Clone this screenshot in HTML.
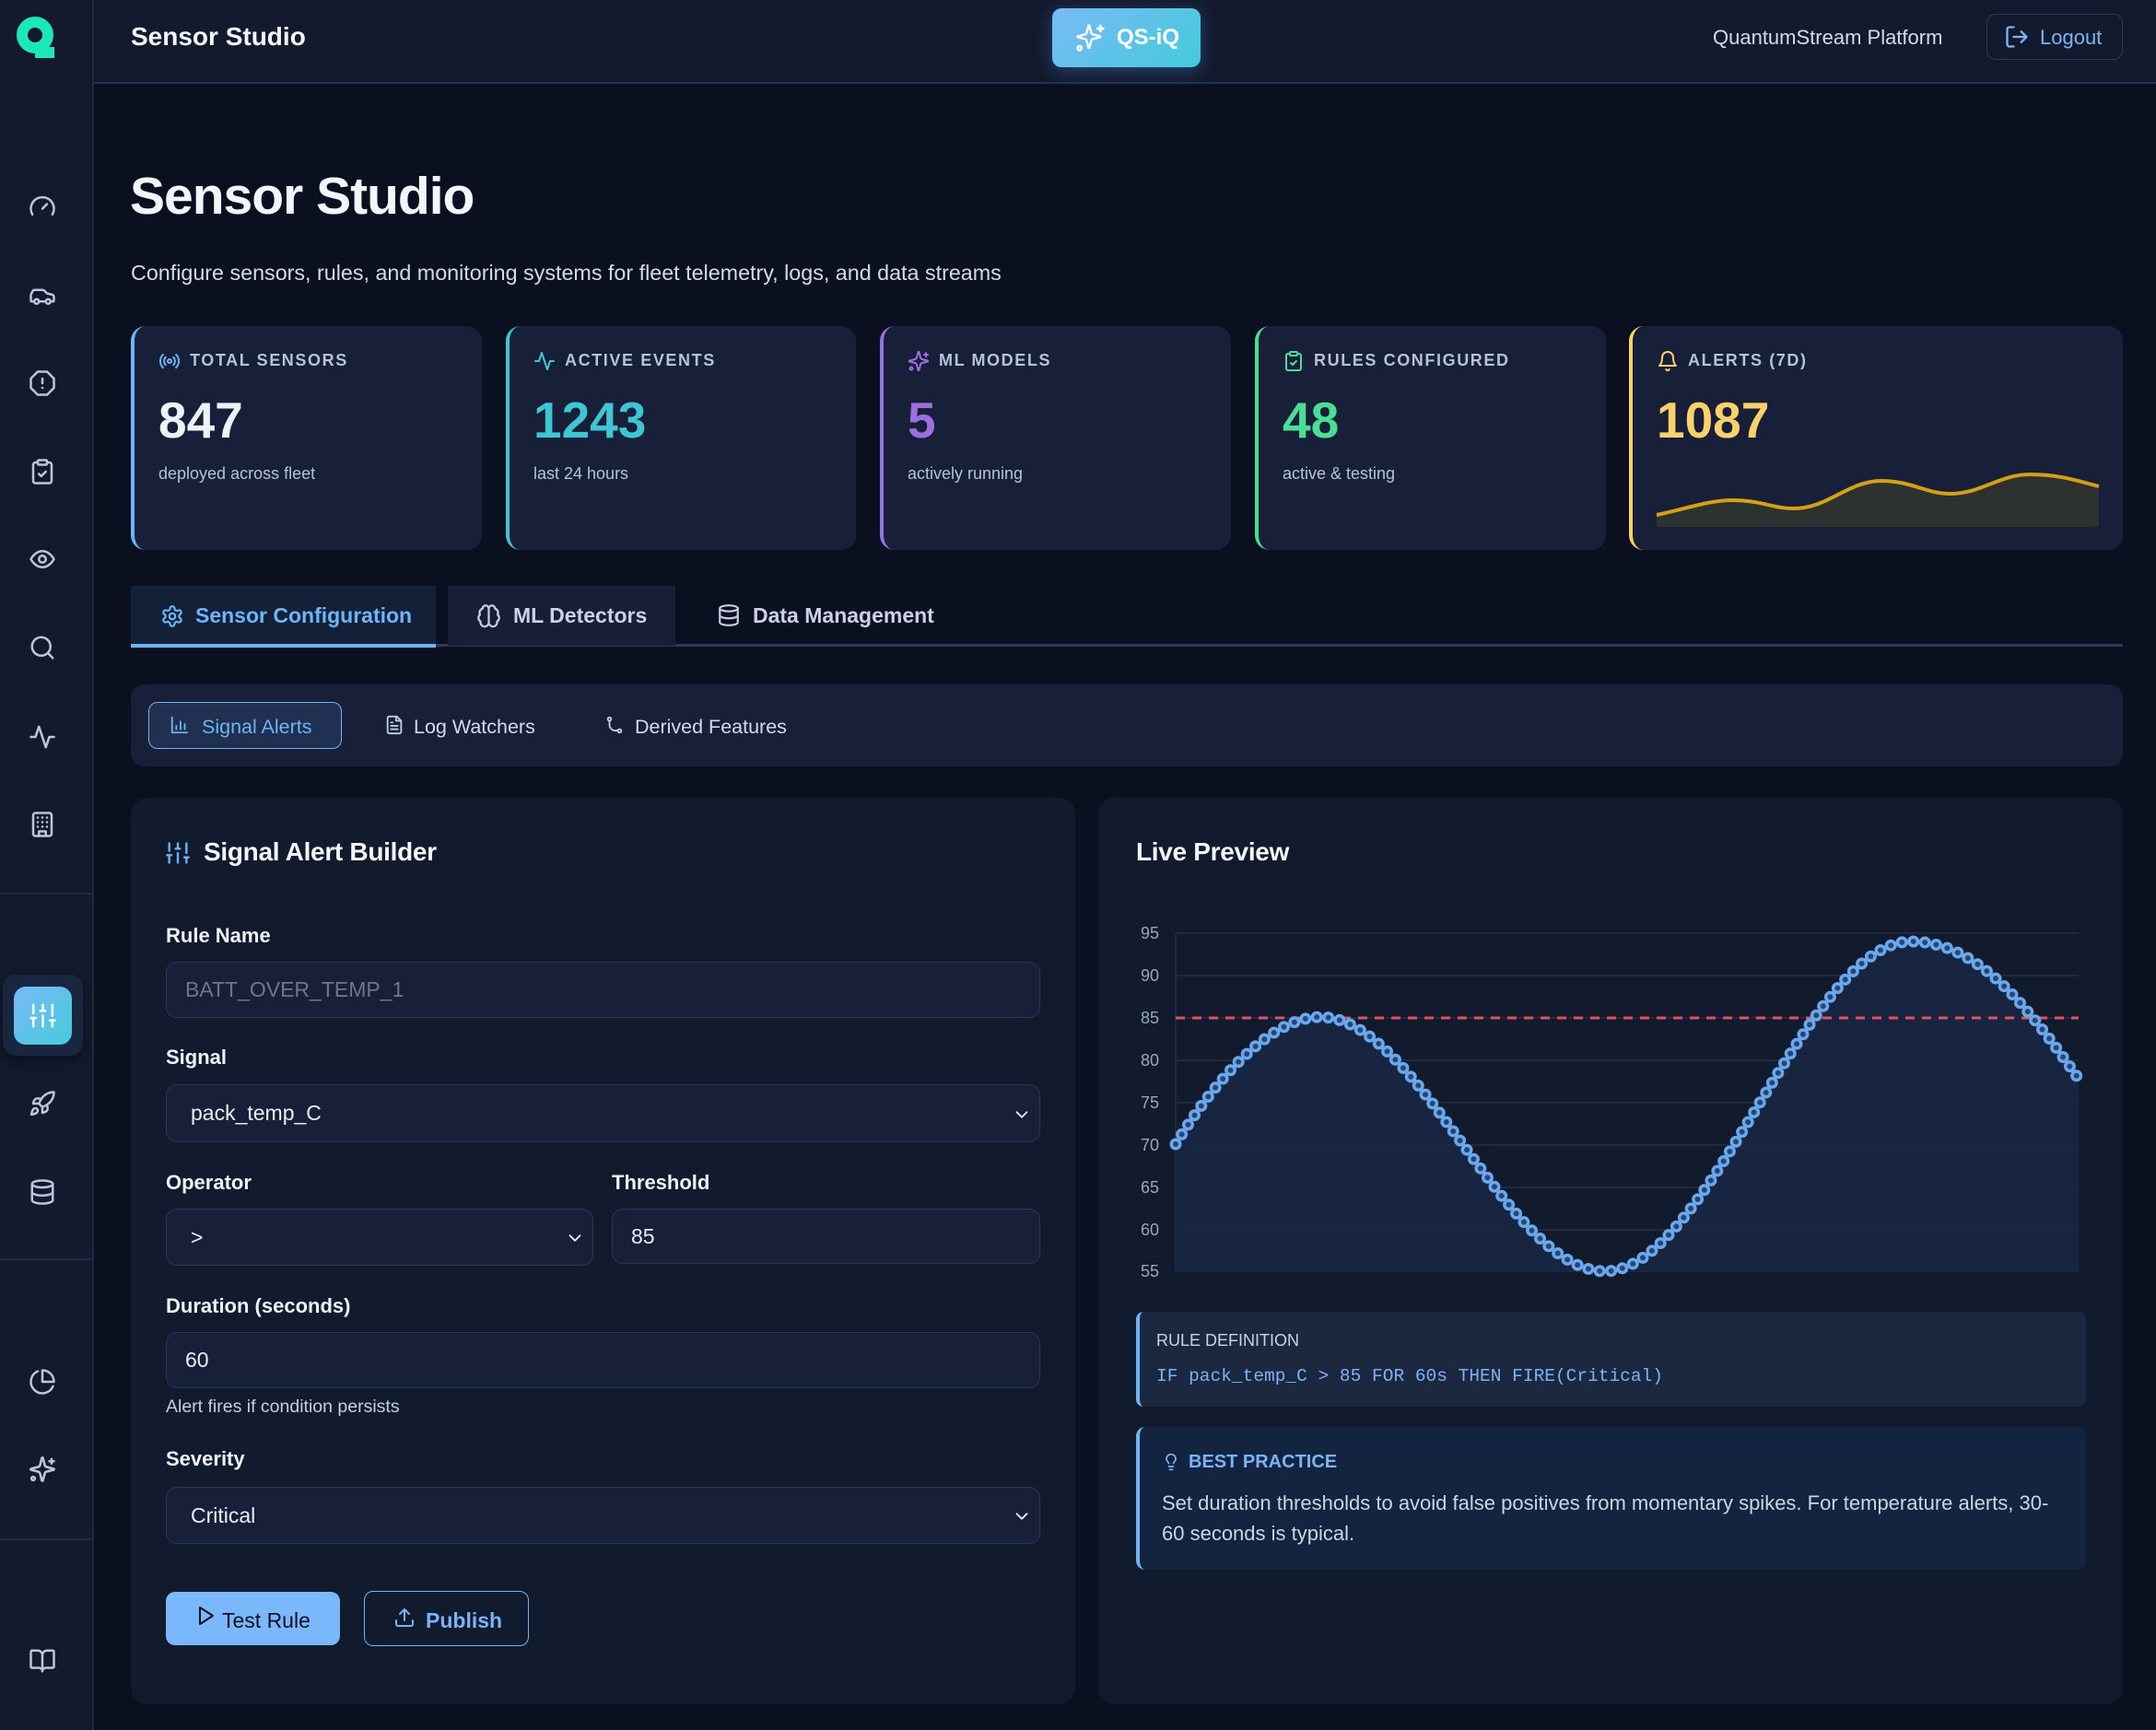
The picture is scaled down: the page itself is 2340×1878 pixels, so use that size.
<!DOCTYPE html>
<html><head><meta charset="utf-8">
<style>
*{box-sizing:border-box;margin:0;padding:0}
body{width:2340px;height:1878px;background:#0b1020;font-family:"Liberation Sans",sans-serif;color:#e8eefa;position:relative;overflow:hidden}
.a{position:absolute}
svg{display:block}
.ic{fill:none;stroke-linecap:round;stroke-linejoin:round}
.card{position:absolute;top:354px;height:243px;background:#172038;border-radius:16px;border-left:4px solid}
.card .lab{position:absolute;left:74px;top:27px;font-size:18px;font-weight:bold;letter-spacing:1.6px;color:#b4c2dc}
.card .ci{position:absolute;left:26px;top:26px}
.card .n{position:absolute;left:26px;top:70px;font-size:55px;font-weight:bold}
.card .s{position:absolute;left:26px;top:150px;font-size:18px;color:#b4c2dc}
.lbl{position:absolute;left:180px;font-size:22px;font-weight:bold;color:#eef2fa}
.inp{position:absolute;background:#172038;border:1.5px solid #2a3656;border-radius:12px;font-size:23px;color:#e8eefa;padding-left:26px;display:flex;align-items:center}
.chev{position:absolute;right:8px;top:50%;margin-top:-10px}
</style></head><body>
<!-- header -->
<div class="a" style="left:0;top:0;width:2340px;height:91px;background:#131a2e;border-bottom:2px solid #243150"></div>
<div class="a" style="left:0;top:0;width:102px;height:1878px;background:#131a2e;border-right:2px solid #1f2a44"></div>
<svg class="a" style="left:14px;top:14px" width="54" height="54" viewBox="0 0 54 54"><circle cx="24" cy="24" r="14" fill="none" stroke="#1de9b6" stroke-width="12"/><rect x="24" y="37" width="21" height="12" fill="#1de9b6"/></svg>
<div class="a" style="left:142px;top:24px;font-size:28px;font-weight:bold;color:#f3f6fc">Sensor Studio</div>
<div class="a" style="left:1142px;top:9px;width:161px;height:64px;border-radius:10px;background:linear-gradient(135deg,#78baf8,#44cbd9);box-shadow:0 4px 18px rgba(80,150,230,.35)"></div>
<svg class="a ic" style="left:1166px;top:24px" width="34" height="34" viewBox="0 0 24 24" stroke="#fff" stroke-width="2"><path d="M9.9 15.5a2 2 0 0 0-1.4-1.4L2.4 12.5a.5.5 0 0 1 0-1l6.1-1.6a2 2 0 0 0 1.4-1.4L11.5 2.4a.5.5 0 0 1 1 0l1.6 6.1a2 2 0 0 0 1.4 1.4l6.1 1.6a.5.5 0 0 1 0 1l-6.1 1.6a2 2 0 0 0-1.4 1.4l-1.6 6.1a.5.5 0 0 1-1 0z" transform="translate(1,1) scale(.85)"/><path d="M20 3v4M22 5h-4"/><circle cx="4" cy="20" r="1.5"/></svg>
<div class="a" style="left:1212px;top:27px;font-size:24px;font-weight:bold;color:#fff">QS-iQ</div>
<div class="a" style="left:1859px;top:28px;font-size:22px;color:#d3dbea">QuantumStream Platform</div>
<div class="a" style="left:2156px;top:15px;width:148px;height:50px;border:1.5px solid #2d3a5a;border-radius:10px"></div>
<svg class="a ic" style="left:2175px;top:26px" width="28" height="28" viewBox="0 0 24 24" stroke="#7ab4f5" stroke-width="2"><path d="M9 21H5a2 2 0 0 1-2-2V5a2 2 0 0 1 2-2h4"/><path d="M16 17l5-5-5-5M21 12H9"/></svg>
<div class="a" style="left:2214px;top:28px;font-size:22px;color:#7ab4f5">Logout</div>

<!-- sidebar icons -->
<svg class="a ic" style="left:31px;top:209px" width="30" height="30" viewBox="0 0 24 24" stroke="#b9c6dc" stroke-width="2"><path d="M12 14l4-4"/><path d="M3.3 19a10 10 0 1 1 17.4 0"/></svg>
<svg class="a ic" style="left:31px;top:306px" width="30" height="30" viewBox="0 0 24 24" stroke="#b9c6dc" stroke-width="2"><path d="M19 17h2c.6 0 1-.4 1-1v-3c0-.9-.7-1.7-1.5-1.9C18.7 10.6 16 10 16 10s-1.3-1.4-2.2-2.3c-.5-.4-1.1-.7-1.8-.7H5c-.6 0-1.1.4-1.4.9l-1.4 2.9A3.7 3.7 0 0 0 2 12v4c0 .6.4 1 1 1h2"/><circle cx="7" cy="17" r="2"/><path d="M9 17h6"/><circle cx="17" cy="17" r="2"/></svg>
<svg class="a ic" style="left:31px;top:401px" width="30" height="30" viewBox="0 0 24 24" stroke="#b9c6dc" stroke-width="2"><path d="M7.9 2h8.2L22 7.9v8.2L16.1 22H7.9L2 16.1V7.9z"/><path d="M12 8v4M12 16h.01"/></svg>
<svg class="a ic" style="left:31px;top:497px" width="30" height="30" viewBox="0 0 24 24" stroke="#b9c6dc" stroke-width="2"><rect x="8" y="2" width="8" height="4" rx="1"/><path d="M16 4h2a2 2 0 0 1 2 2v14a2 2 0 0 1-2 2H6a2 2 0 0 1-2-2V6a2 2 0 0 1 2-2h2"/><path d="M9 14l2 2 4-4"/></svg>
<svg class="a ic" style="left:31px;top:592px" width="30" height="30" viewBox="0 0 24 24" stroke="#b9c6dc" stroke-width="2"><path d="M2 12s3.5-7 10-7 10 7 10 7-3.5 7-10 7S2 12 2 12z"/><circle cx="12" cy="12" r="3"/></svg>
<svg class="a ic" style="left:31px;top:688px" width="30" height="30" viewBox="0 0 24 24" stroke="#b9c6dc" stroke-width="2"><circle cx="11" cy="11" r="8"/><path d="M21 21l-4.3-4.3"/></svg>
<svg class="a ic" style="left:31px;top:785px" width="30" height="30" viewBox="0 0 24 24" stroke="#b9c6dc" stroke-width="2"><path d="M22 12h-4l-3 9L9 3l-3 9H2"/></svg>
<svg class="a ic" style="left:31px;top:880px" width="30" height="30" viewBox="0 0 24 24" stroke="#b9c6dc" stroke-width="2"><rect x="4" y="2" width="16" height="20" rx="2"/><path d="M9 22v-4h6v4M8 6h.01M12 6h.01M16 6h.01M8 10h.01M12 10h.01M16 10h.01M8 14h.01M12 14h.01M16 14h.01"/></svg>
<div class="a" style="left:0;top:969px;width:101px;height:2px;background:#1f2a44"></div>
<div class="a" style="left:3px;top:1058px;width:87px;height:88px;border-radius:14px;background:#1a2540;box-shadow:0 6px 16px rgba(0,0,0,.4)"></div>
<div class="a" style="left:15px;top:1071px;width:63px;height:63px;border-radius:13px;background:linear-gradient(135deg,#78baf8,#44cbd9)"></div>
<svg class="a ic" style="left:31px;top:1087px" width="31" height="31" viewBox="0 0 24 24" stroke="#fff" stroke-width="2"><path d="M4 21v-7M4 10V3M12 21v-9M12 8V3M20 21v-5M20 12V3M2 14h4M10 8h4M18 16h4"/></svg>
<svg class="a ic" style="left:31px;top:1183px" width="30" height="30" viewBox="0 0 24 24" stroke="#b9c6dc" stroke-width="2"><path d="M4.5 16.5c-1.5 1.3-2 5-2 5s3.7-.5 5-2c.7-.8.7-2.1-.1-2.9a2.2 2.2 0 0 0-2.9-.1z"/><path d="M12 15l-3-3a22 22 0 0 1 2-3.9A12.9 12.9 0 0 1 22 2c0 2.7-.8 7.5-6 11a22.4 22.4 0 0 1-4 2z"/><path d="M9 12H4s.6-3 2-4c1.6-1.1 5 0 5 0M12 15v5s3-.6 4-2c1.1-1.6 0-5 0-5"/></svg>
<svg class="a ic" style="left:31px;top:1279px" width="30" height="30" viewBox="0 0 24 24" stroke="#b9c6dc" stroke-width="2"><ellipse cx="12" cy="5" rx="9" ry="3"/><path d="M3 5v14a9 3 0 0 0 18 0V5"/><path d="M3 12a9 3 0 0 0 18 0"/></svg>
<div class="a" style="left:0;top:1366px;width:101px;height:2px;background:#1f2a44"></div>
<svg class="a ic" style="left:31px;top:1485px" width="30" height="30" viewBox="0 0 24 24" stroke="#b9c6dc" stroke-width="2"><path d="M21.2 15.9A10 10 0 1 1 8 2.8"/><path d="M22 12A10 10 0 0 0 12 2v10z"/></svg>
<svg class="a ic" style="left:31px;top:1580px" width="30" height="30" viewBox="0 0 24 24" stroke="#b9c6dc" stroke-width="2"><path d="M9.9 15.5a2 2 0 0 0-1.4-1.4L2.4 12.5a.5.5 0 0 1 0-1l6.1-1.6a2 2 0 0 0 1.4-1.4L11.5 2.4a.5.5 0 0 1 1 0l1.6 6.1a2 2 0 0 0 1.4 1.4l6.1 1.6a.5.5 0 0 1 0 1l-6.1 1.6a2 2 0 0 0-1.4 1.4l-1.6 6.1a.5.5 0 0 1-1 0z"/><path d="M20 3v4M22 5h-4"/><circle cx="4" cy="20" r="1.5"/></svg>
<div class="a" style="left:0;top:1670px;width:101px;height:2px;background:#1f2a44"></div>
<svg class="a ic" style="left:31px;top:1788px" width="30" height="30" viewBox="0 0 24 24" stroke="#b9c6dc" stroke-width="2"><path d="M12 7v14M3 18a1 1 0 0 1-1-1V4a1 1 0 0 1 1-1h5a4 4 0 0 1 4 4 4 4 0 0 1 4-4h5a1 1 0 0 1 1 1v13a1 1 0 0 1-1 1h-6a3 3 0 0 0-3 3 3 3 0 0 0-3-3z"/></svg>

<!-- title -->
<div class="a" style="left:141px;top:180px;font-size:57px;font-weight:bold;color:#f3f6fc;letter-spacing:-1px">Sensor Studio</div>
<div class="a" style="left:142px;top:283px;font-size:23.3px;color:#d3dbea">Configure sensors, rules, and monitoring systems for fleet telemetry, logs, and data streams</div>

<!-- stat cards -->
<div class="card" style="left:142px;width:381px;border-color:#6cb6f8">
<svg class="ci ic" width="24" height="24" viewBox="0 0 24 24" stroke="#6cb6f8" stroke-width="2"><path d="M4.9 19.1C1 15.2 1 8.8 4.9 4.9M7.8 16.2c-2.3-2.3-2.3-6.1 0-8.5M16.2 7.8c2.3 2.3 2.3 6.1 0 8.5M19.1 4.9C23 8.8 23 15.1 19.1 19"/><circle cx="12" cy="12" r="2"/></svg>
<div class="lab" style="left:60px">TOTAL SENSORS</div><div class="n" style="color:#eef2fa">847</div><div class="s">deployed across fleet</div></div>
<div class="card" style="left:549px;width:380px;border-color:#3ec6d4">
<svg class="ci ic" width="24" height="24" viewBox="0 0 24 24" stroke="#3ec6d4" stroke-width="2"><path d="M22 12h-4l-3 9L9 3l-3 9H2"/></svg>
<div class="lab" style="left:60px">ACTIVE EVENTS</div><div class="n" style="color:#3ec6d4">1243</div><div class="s">last 24 hours</div></div>
<div class="card" style="left:955px;width:381px;border-color:#9b6fe0">
<svg class="ci ic" width="24" height="24" viewBox="0 0 24 24" stroke="#9b6fe0" stroke-width="2"><path d="M9.9 15.5a2 2 0 0 0-1.4-1.4L2.4 12.5a.5.5 0 0 1 0-1l6.1-1.6a2 2 0 0 0 1.4-1.4L11.5 2.4a.5.5 0 0 1 1 0l1.6 6.1a2 2 0 0 0 1.4 1.4l6.1 1.6a.5.5 0 0 1 0 1l-6.1 1.6a2 2 0 0 0-1.4 1.4l-1.6 6.1a.5.5 0 0 1-1 0z"/><path d="M20 3v4M22 5h-4"/><circle cx="4" cy="20" r="1.5"/></svg>
<div class="lab" style="left:60px">ML MODELS</div><div class="n" style="color:#9b6fe0">5</div><div class="s">actively running</div></div>
<div class="card" style="left:1362px;width:381px;border-color:#4ade95">
<svg class="ci ic" width="24" height="24" viewBox="0 0 24 24" stroke="#4ade95" stroke-width="2"><rect x="8" y="2" width="8" height="4" rx="1"/><path d="M16 4h2a2 2 0 0 1 2 2v14a2 2 0 0 1-2 2H6a2 2 0 0 1-2-2V6a2 2 0 0 1 2-2h2"/><path d="M9 14l2 2 4-4"/></svg>
<div class="lab" style="left:60px">RULES CONFIGURED</div><div class="n" style="color:#4ade95">48</div><div class="s">active &amp; testing</div></div>
<div class="card" style="left:1768px;width:536px;border-color:#fcd06b">
<svg class="ci ic" width="24" height="24" viewBox="0 0 24 24" stroke="#fcd06b" stroke-width="2"><path d="M6 8a6 6 0 0 1 12 0c0 7 3 9 3 9H3s3-2 3-9"/><path d="M10.3 21a1.9 1.9 0 0 0 3.4 0"/></svg>
<div class="lab" style="left:60px">ALERTS (7D)</div><div class="n" style="color:#fcd06b">1087</div></div>
<svg class="a" style="left:0;top:0" width="2340" height="600"><path d="M1798 559 C1835 551 1855 543 1881 543 C1910 543 1925 552 1946 552 C1985 552 2005 522 2042 522 C2075 522 2090 536 2117 536 C2150 536 2170 515 2203 515 C2235 515 2255 522 2278 528 L2278 572 L1798 572 Z" fill="#2d3130"/><path d="M1798 559 C1835 551 1855 543 1881 543 C1910 543 1925 552 1946 552 C1985 552 2005 522 2042 522 C2075 522 2090 536 2117 536 C2150 536 2170 515 2203 515 C2235 515 2255 522 2278 528" fill="none" stroke="#d4a017" stroke-width="4"/></svg>

<!-- tabs -->
<div class="a" style="left:142px;top:699px;width:2162px;height:3px;background:#2d3a5a"></div>
<div class="a" style="left:142px;top:636px;width:331px;height:67px;background:#142038;border-bottom:4px solid #6cb6f8"></div>
<div class="a" style="left:486px;top:636px;width:247px;height:65px;background:#181e38"></div>
<svg class="a ic" style="left:174px;top:656px" width="26" height="26" viewBox="0 0 24 24" stroke="#6cb6f8" stroke-width="2"><path d="M12.2 2h-.4a2 2 0 0 0-2 2v.2a2 2 0 0 1-1 1.7l-.4.3a2 2 0 0 1-2 0l-.2-.1a2 2 0 0 0-2.7.7l-.2.4a2 2 0 0 0 .7 2.7l.2.1a2 2 0 0 1 1 1.7v.5a2 2 0 0 1-1 1.7l-.2.1a2 2 0 0 0-.7 2.7l.2.4a2 2 0 0 0 2.7.7l.2-.1a2 2 0 0 1 2 0l.4.3a2 2 0 0 1 1 1.7v.2a2 2 0 0 0 2 2h.4a2 2 0 0 0 2-2v-.2a2 2 0 0 1 1-1.7l.4-.3a2 2 0 0 1 2 0l.2.1a2 2 0 0 0 2.7-.7l.2-.4a2 2 0 0 0-.7-2.7l-.2-.1a2 2 0 0 1-1-1.7v-.5a2 2 0 0 1 1-1.7l.2-.1a2 2 0 0 0 .7-2.7l-.2-.4a2 2 0 0 0-2.7-.7l-.2.1a2 2 0 0 1-2 0l-.4-.3a2 2 0 0 1-1-1.7V4a2 2 0 0 0-2-2z"/><circle cx="12" cy="12" r="3"/></svg>
<div class="a" style="left:212px;top:655px;font-size:23px;font-weight:bold;color:#6cb6f8">Sensor Configuration</div>
<svg class="a ic" style="left:517px;top:655px" width="27" height="27" viewBox="0 0 24 24" stroke="#c3cee2" stroke-width="2"><path d="M12 5a3 3 0 1 0-6 .1 4 4 0 0 0-2.5 5.8 4 4 0 0 0 .6 6.6A4 4 0 1 0 12 18zM12 5a3 3 0 1 1 6 .1 4 4 0 0 1 2.5 5.8 4 4 0 0 1-.6 6.6A4 4 0 1 1 12 18zM12 5v13"/></svg>
<div class="a" style="left:557px;top:655px;font-size:23px;font-weight:bold;color:#c9d3e6">ML Detectors</div>
<svg class="a ic" style="left:778px;top:655px" width="26" height="26" viewBox="0 0 24 24" stroke="#c3cee2" stroke-width="2"><ellipse cx="12" cy="5" rx="9" ry="3"/><path d="M3 5v14a9 3 0 0 0 18 0V5"/><path d="M3 12a9 3 0 0 0 18 0"/></svg>
<div class="a" style="left:817px;top:655px;font-size:23px;font-weight:bold;color:#c9d3e6">Data Management</div>

<!-- subtabs -->
<div class="a" style="left:142px;top:743px;width:2162px;height:89px;background:#172038;border-radius:14px"></div>
<div class="a" style="left:161px;top:762px;width:210px;height:51px;background:#1f3050;border:1.5px solid #6cb6f8;border-radius:10px"></div>
<svg class="a ic" style="left:184px;top:776px" width="22" height="22" viewBox="0 0 24 24" stroke="#6cb6f8" stroke-width="2"><path d="M3 3v18h18M8 17v-4M13 17V8M18 17v-6"/></svg>
<div class="a" style="left:219px;top:777px;font-size:21.5px;color:#6cb6f8">Signal Alerts</div>
<svg class="a ic" style="left:417px;top:776px" width="22" height="22" viewBox="0 0 24 24" stroke="#c3cee2" stroke-width="2"><path d="M15 2H6a2 2 0 0 0-2 2v16a2 2 0 0 0 2 2h12a2 2 0 0 0 2-2V7z"/><path d="M14 2v5h5M16 13H8M16 17H8M10 9H8"/></svg>
<div class="a" style="left:449px;top:777px;font-size:21.5px;color:#d3dbea">Log Watchers</div>
<svg class="a ic" style="left:656px;top:776px" width="22" height="22" viewBox="0 0 24 24" stroke="#c3cee2" stroke-width="2"><circle cx="6" cy="5" r="2"/><circle cx="18" cy="19" r="2"/><path d="M6 7v5a7 7 0 0 0 10 6"/></svg>
<div class="a" style="left:689px;top:777px;font-size:21.5px;color:#d3dbea">Derived Features</div>

<!-- left panel -->
<div class="a" style="left:142px;top:866px;width:1025px;height:984px;background:#121a2e;border-radius:18px"></div>
<svg class="a ic" style="left:179px;top:912px" width="28" height="28" viewBox="0 0 24 24" stroke="#6cb6f8" stroke-width="2"><path d="M4 21v-7M4 10V3M12 21v-9M12 8V3M20 21v-5M20 12V3M2 14h4M10 8h4M18 16h4"/></svg>
<div class="a" style="left:221px;top:909px;font-size:28px;font-weight:bold;color:#f3f6fc;letter-spacing:-0.3px">Signal Alert Builder</div>
<div class="lbl" style="top:1003px">Rule Name</div>
<div class="inp" style="left:180px;top:1044px;width:949px;height:61px;color:#6f7786;padding-left:20px">BATT_OVER_TEMP_1</div>
<div class="lbl" style="top:1135px">Signal</div>
<div class="inp" style="left:180px;top:1177px;width:949px;height:63px">pack_temp_C<svg class="chev ic" width="22" height="22" viewBox="0 0 24 24" stroke="#e8eefa" stroke-width="2"><path d="M6 9l6 6 6-6"/></svg></div>
<div class="lbl" style="top:1271px">Operator</div>
<div class="lbl" style="top:1271px;left:664px">Threshold</div>
<div class="inp" style="left:180px;top:1312px;width:464px;height:62px">&gt;<svg class="chev ic" width="22" height="22" viewBox="0 0 24 24" stroke="#e8eefa" stroke-width="2"><path d="M6 9l6 6 6-6"/></svg></div>
<div class="inp" style="left:664px;top:1312px;width:465px;height:60px;padding-left:20px">85</div>
<div class="lbl" style="top:1405px">Duration (seconds)</div>
<div class="inp" style="left:180px;top:1446px;width:949px;height:61px;padding-left:20px">60</div>
<div class="a" style="left:180px;top:1516px;font-size:19.5px;color:#c3cee2">Alert fires if condition persists</div>
<div class="lbl" style="top:1571px">Severity</div>
<div class="inp" style="left:180px;top:1614px;width:949px;height:62px">Critical<svg class="chev ic" width="22" height="22" viewBox="0 0 24 24" stroke="#e8eefa" stroke-width="2"><path d="M6 9l6 6 6-6"/></svg></div>
<div class="a" style="left:180px;top:1728px;width:189px;height:58px;background:#7ab8fb;border-radius:10px"></div>
<svg class="a ic" style="left:211px;top:1742px" width="24" height="24" viewBox="0 0 24 24" stroke="#0b1020" stroke-width="2"><path d="M6 3l14 9-14 9z"/></svg>
<div class="a" style="left:241px;top:1746px;font-size:23px;color:#0b1020">Test Rule</div>
<div class="a" style="left:395px;top:1727px;width:179px;height:60px;border:1.5px solid #6cb6f8;border-radius:10px"></div>
<svg class="a ic" style="left:427px;top:1744px" width="24" height="24" viewBox="0 0 24 24" stroke="#7ab4f5" stroke-width="2"><path d="M21 15v4a2 2 0 0 1-2 2H5a2 2 0 0 1-2-2v-4M17 8l-5-5-5 5M12 3v12"/></svg>
<div class="a" style="left:462px;top:1746px;font-size:23px;font-weight:bold;color:#7ab4f5">Publish</div>

<!-- right panel -->
<div class="a" style="left:1192px;top:866px;width:1112px;height:984px;background:#121a2e;border-radius:18px"></div>
<div class="a" style="left:1233px;top:909px;font-size:28px;font-weight:bold;color:#f3f6fc;letter-spacing:-0.3px">Live Preview</div>
<svg class="a" style="left:0;top:0" width="2340" height="1420" font-family="Liberation Sans, sans-serif" font-size="18" fill="#9aa6bb">
<g stroke="#1f2a40" stroke-width="2">
<line x1="1276" y1="1013" x2="2256" y2="1013"/><line x1="1276" y1="1059" x2="2256" y2="1059"/><line x1="1276" y1="1105" x2="2256" y2="1105"/><line x1="1276" y1="1151" x2="2256" y2="1151"/><line x1="1276" y1="1197" x2="2256" y2="1197"/><line x1="1276" y1="1243" x2="2256" y2="1243"/><line x1="1276" y1="1289" x2="2256" y2="1289"/><line x1="1276" y1="1335" x2="2256" y2="1335"/><line x1="1276" y1="1380" x2="2256" y2="1380"/><line x1="1276" y1="1013" x2="1276" y2="1380"/></g>
<g text-anchor="end"><text x="1258" y="1019">95</text><text x="1258" y="1065">90</text><text x="1258" y="1111">85</text><text x="1258" y="1157">80</text><text x="1258" y="1203">75</text><text x="1258" y="1249">70</text><text x="1258" y="1295">65</text><text x="1258" y="1341">60</text><text x="1258" y="1386">55</text></g>
<path d="M1276 1242 C1320 1170 1380 1104 1433 1104 C1540 1104 1635 1380 1742 1380 C1855 1380 1960 1022 2074 1022 C2150 1022 2205 1100 2256 1171 L2256 1380 L1276 1380 Z" fill="#1a2744" fill-opacity="0.9"/>
<line x1="1276" y1="1105" x2="2256" y2="1105" stroke="#e05260" stroke-width="3" stroke-dasharray="10 8"/>
<path d="M1276 1242 C1320 1170 1380 1104 1433 1104 C1540 1104 1635 1380 1742 1380 C1855 1380 1960 1022 2074 1022 C2150 1022 2205 1100 2256 1171" fill="none" stroke="#5e9ee6" stroke-width="4"/>
<path d="M1276 1242 C1320 1170 1380 1104 1433 1104 C1540 1104 1635 1380 1742 1380 C1855 1380 1960 1022 2074 1022 C2150 1022 2205 1100 2256 1171" fill="none" stroke="#6aa8ee" stroke-width="13" stroke-linecap="round" stroke-dasharray="0 12.5"/>
<path d="M1276 1242 C1320 1170 1380 1104 1433 1104 C1540 1104 1635 1380 1742 1380 C1855 1380 1960 1022 2074 1022 C2150 1022 2205 1100 2256 1171" fill="none" stroke="#2a4470" stroke-width="6" stroke-linecap="round" stroke-dasharray="0 12.5"/>
</svg>
<div class="a" style="left:1233px;top:1424px;width:1031px;height:103px;background:#1c2740;border-left:4px solid #6cb6f8;border-radius:8px"></div>
<div class="a" style="left:1255px;top:1445px;font-size:18px;color:#c9d3e6">RULE DEFINITION</div>
<div class="a" style="left:1255px;top:1483px;font-size:19.5px;font-family:'Liberation Mono',monospace;color:#7ab4f5">IF pack_temp_C &gt; 85 FOR 60s THEN FIRE(Critical)</div>
<div class="a" style="left:1233px;top:1549px;width:1031px;height:155px;background:#132440;border-left:4px solid #6cb6f8;border-radius:10px"></div>
<svg class="a ic" style="left:1261px;top:1576px" width="20" height="22" viewBox="0 0 24 24" stroke="#7ab4f5" stroke-width="2"><path d="M15 14c.2-1 .7-1.7 1.5-2.5 1-.9 1.5-2.2 1.5-3.5A6 6 0 0 0 6 8c0 1 .2 2.2 1.5 3.5.7.7 1.3 1.5 1.5 2.5M9 18h6M10 22h4"/></svg>
<div class="a" style="left:1290px;top:1576px;font-size:20px;font-weight:bold;color:#7ab4f5">BEST PRACTICE</div>
<div class="a" style="left:1261px;top:1615px;width:980px;font-size:22px;line-height:33px;color:#cbd5e6">Set duration thresholds to avoid false positives from momentary spikes. For temperature alerts, 30-60 seconds is typical.</div>
</body></html>
